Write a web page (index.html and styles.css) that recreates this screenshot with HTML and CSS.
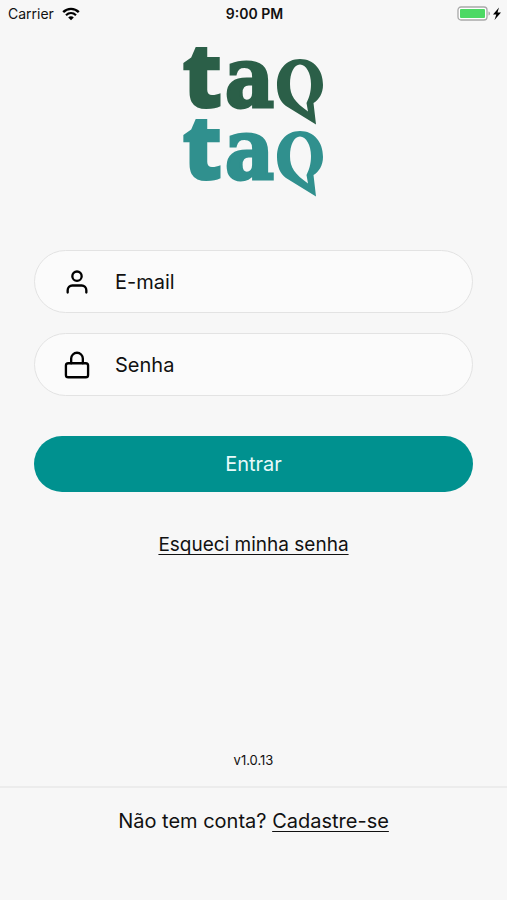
FILE: index.html
```html
<!DOCTYPE html>
<html lang="pt-BR">
<head>
<meta charset="utf-8">
<meta name="viewport" content="width=device-width, initial-scale=1">
<title>taq taq</title>
<link rel="stylesheet" href="styles.css">
</head>
<body>
<header class="status">
  <div class="status-left">
    <span>Carrier</span>
    <svg width="18" height="14" viewBox="0 0 18 14" aria-hidden="true">
      <path d="M1.2 5.2C5.6.8 12.4.8 16.8 5.2" fill="none" stroke="#000" stroke-width="2.4"/>
      <path d="M4 8.200C6.900 5.500 11.100 5.500 14 8.200" fill="none" stroke="#000" stroke-width="2.2"/>
      <path d="M9 13.200 6.200 10.400C7.800 8.900 10.200 8.900 11.800 10.400Z"/>
    </svg>
  </div>
  <div class="status-time">9:00 PM</div>
  <div class="status-right">
    <svg width="44" height="16" viewBox="0 0 44 16" aria-hidden="true">
      <rect x="1" y="1" width="29" height="13" rx="3" fill="#fff" stroke="#a9a9a9" stroke-width="1.300"/>
      <rect x="3" y="3" width="25" height="9" rx="1" fill="#4cd964"/>
      <path d="M31.500 5.500v4c2-.6 2-3.400 0-4Z" fill="#a9a9a9"/>
      <path d="M42 1.500 36 8.500h3.300L37.500 14 44 6.500h-3.500Z"/>
    </svg>
  </div>
</header>
<main class="login">
  <svg class="logo" width="140" height="152" viewBox="0 0 140 152" role="img" aria-label="taq taq">
    <defs>
      <path id="bubble" fill-rule="evenodd" d="M116 13C130 13 139 24 139 39C139 47 135 54 129.500 57L132 78.500L102 60C96 56 93 48 93 39C93 24 102 13 116 13ZM116 18.500C110 18.500 106 27 106 38C106 50 111 56 124 65.500L122.500 57C125 52 127 46 127 38C127 27 122 18.500 116 18.500Z"/>
    </defs>
    <g class="logo-top">
      <text class="logo-t" x="-3" y="62">t</text><text class="logo-a" x="41" y="61">a</text>
      <use href="#bubble"/>
    </g>
    <g class="logo-bottom" transform="translate(0 72)">
      <text class="logo-t" x="-3" y="62">t</text><text class="logo-a" x="41" y="61">a</text>
      <use href="#bubble"/>
    </g>
  </svg>
  <form class="form">
    <div class="field">
      <svg class="icon" viewBox="0 0 24 24" aria-hidden="true"><path d="M20 21v-2a4 4 0 0 0-4-4H8a4 4 0 0 0-4 4v2"/><circle cx="12" cy="7" r="4"/></svg>
      <input type="email" placeholder="E-mail" aria-label="E-mail">
    </div>
    <div class="field">
      <svg class="icon" viewBox="0 0 24 24" aria-hidden="true"><rect x="2.500" y="10.500" width="19" height="12" rx="2"/><path d="M7 10.500V6.500a5 5 0 0 1 10 0v4"/></svg>
      <input type="password" placeholder="Senha" aria-label="Senha">
    </div>
    <button class="submit" type="button">Entrar</button>
  </form>
  <a class="forgot" href="#senha">Esqueci minha senha</a>
  <p class="version">v1.0.13</p>
</main>
<footer class="signup">Não tem conta? <a href="#cadastro">Cadastre-se</a></footer>
</body>
</html>
```
FILE: styles.css
```css
* {
  box-sizing: border-box;
}

body {
  margin: 0;
  min-height: 100vh;
  display: flex;
  flex-direction: column;
  background: #f7f7f7;
  color: #111;
  font: 20px/24px Inter, "Liberation Sans", sans-serif;
}

a {
  color: inherit;
  text-decoration-thickness: 1px;
  text-underline-offset: 3px;
  text-decoration-skip-ink: none;
}

.status {
  display: grid;
  grid-template-columns: 1fr auto 1fr;
  align-items: center;
  height: 28px;
  padding: 0 6px 0 8px;
  font-size: 14px;
}

.status-left {
  display: flex;
  align-items: center;
  gap: 8px;
}

.status-time {
  font-weight: 600;
}

.status-right {
  display: flex;
  justify-content: flex-end;
}

.login {
  flex: 1;
  display: flex;
  flex-direction: column;
  align-items: center;
  padding: 18px 34px 14px;
}

.logo {
  overflow: visible;
}

.logo-t {
  font: 800 92px "Open Sans", "Noto Sans", sans-serif;
}

.logo-a {
  font: 700 84px "DejaVu Serif Condensed", "DejaVu Serif", serif;
  stroke-width: 3px;
}

.logo-top {
  fill: #2b5f48;
  stroke: #2b5f48;
  stroke-width: 0;
}

.logo-bottom {
  fill: #30908e;
  stroke: #30908e;
  stroke-width: 0;
}

.form {
  display: flex;
  flex-direction: column;
  gap: 20px;
  width: 100%;
  margin-top: 52px;
}

.field {
  display: flex;
  align-items: center;
  gap: 24px;
  height: 63px;
  padding: 0 28px;
  border: 1px solid #e3e3e3;
  border-radius: 32px;
  background: #fbfbfb;
}

.icon {
  flex: none;
  width: 28px;
  height: 28px;
  fill: none;
  stroke: #000;
  stroke-width: 2;
  stroke-linecap: round;
  stroke-linejoin: round;
}

.field input {
  flex: 1;
  min-width: 0;
  padding: 0;
  border: 0;
  outline: 0;
  background: none;
  color: #111;
  font: inherit;
}

.field input::placeholder {
  color: #111;
  opacity: 1;
}

.submit {
  height: 56px;
  margin-top: 20px;
  border: 0;
  border-radius: 28px;
  background: #00918f;
  color: #e8fafa;
  font: inherit;
}

.forgot {
  margin-top: 41px;
  font-size: 19px;
}

.version {
  margin: auto 0 0;
  font-size: 13px;
  line-height: 24px;
}

.signup {
  height: 114px;
  padding-top: 21px;
  border-top: 2px solid #ececec;
  text-align: center;
}
```
